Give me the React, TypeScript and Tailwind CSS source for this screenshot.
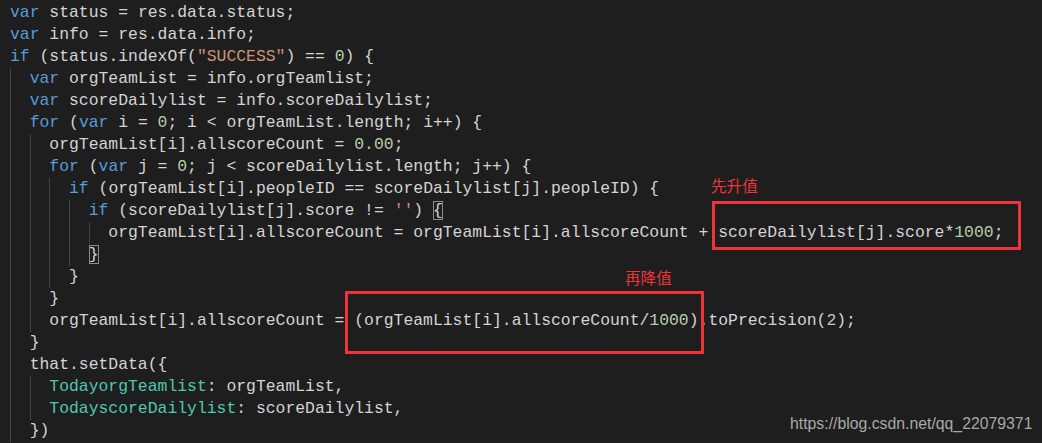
import { type FC, type ReactNode } from 'react';

type Tok = [string, string?];

const K = 'text-[#569cd6]';
const N = 'text-[#b5cea8]';
const S = 'text-[#ce9178]';
const P = 'text-[#4ec9b0]';

// [indent level, tokens]
const lines: [number, Tok[]][] = [
  [0, [['var', K], [' status = res.data.status;']]],
  [0, [['var', K], [' info = res.data.info;']]],
  [0, [['if', K], [' (status.indexOf('], ['"SUCCESS"', S], [') == '], ['0', N], [') {']]],
  [1, [['var', K], [' orgTeamList = info.orgTeamlist;']]],
  [1, [['var', K], [' scoreDailylist = info.scoreDailylist;']]],
  [1, [['for', K], [' ('], ['var', K], [' i = '], ['0', N], ['; i < orgTeamList.length; i++) {']]],
  [2, [['orgTeamList[i].allscoreCount = '], ['0.00', N], [';']]],
  [2, [['for', K], [' ('], ['var', K], [' j = '], ['0', N], ['; j < scoreDailylist.length; j++) {']]],
  [3, [['if', K], [' (orgTeamList[i].peopleID == scoreDailylist[j].peopleID) {']]],
  [4, [['if', K], [" (scoreDailylist[j].score != "], ["''", S], [') '], ['{', 'match']]],
  [5, [['orgTeamList[i].allscoreCount = orgTeamList[i].allscoreCount + scoreDailylist[j].score*'], ['1000', N], [';']]],
  [4, [['}', 'match']]],
  [3, [['}']]],
  [2, [['}']]],
  [2, [['orgTeamList[i].allscoreCount = (orgTeamList[i].allscoreCount/'], ['1000', N], [').toPrecision('], ['2', N], [');']]],
  [1, [['}']]],
  [1, [['that.setData({']]],
  [2, [['TodayorgTeamlist', P], [': orgTeamList,']]],
  [2, [['TodayscoreDailylist', P], [': scoreDailylist,']]],
  [1, [['})']]],
];

const Token: FC<{ t: Tok }> = ({ t }) => {
  const [text, cls] = t;
  if (cls === 'match') {
    return <span className="outline outline-1 outline-[#8a8a8a] -outline-offset-1">{text}</span>;
  }
  return <span className={cls}>{text}</span>;
};

const CodeLine: FC<{ level: number; tokens: Tok[] }> = ({ level, tokens }) => {
  const guides: ReactNode[] = [];
  for (let i = 0; i < level; i++) {
    guides.push(<span key={i} className="inline-block w-[2ch] h-[22px] align-top border-l border-[#444]" />);
  }
  return (
    <div className="h-[22px] leading-[22px] whitespace-pre flex">
      {guides}
      <span>
        {tokens.map((t, i) => <Token key={i} t={t} />)}
      </span>
    </div>
  );
};

export default function App() {
  return (
    <div className="relative w-[1042px] h-[443px] overflow-hidden bg-[#1e1e1e]">
      <div
        className="pt-[2px] pl-[10px] text-[16.4px] text-[#d4d4d4]"
        style={{ fontFamily: '"Liberation Mono", monospace' }}
      >
        {lines.map(([lvl, toks], i) => <CodeLine key={i} level={lvl} tokens={toks} />)}
      </div>

      {/* annotations */}
      <div className="absolute left-[712px] top-[201px] w-[309px] h-[49px] border-[3px] border-[#f0333a]" />
      <div className="absolute left-[345px] top-[291px] w-[359px] h-[63px] border-[3px] border-[#f0333a]" />
      <div
        className="absolute left-[711px] top-[175px] text-[15.6px] leading-[20px] text-[#f0333a]"
        style={{ fontFamily: '"Noto Sans CJK SC", sans-serif' }}
      >
        先升值
      </div>
      <div
        className="absolute left-[625px] top-[267px] text-[15.6px] leading-[20px] text-[#f0333a]"
        style={{ fontFamily: '"Noto Sans CJK SC", sans-serif' }}
      >
        再降值
      </div>
      <div
        className="absolute left-[790px] top-[414px] text-[15.8px] leading-[20px] text-[#a8a8a8]"
        style={{ fontFamily: '"Liberation Sans", Arial, sans-serif' }}
      >
        https://blog.csdn.net/qq_22079371
      </div>
    </div>
  );
}
